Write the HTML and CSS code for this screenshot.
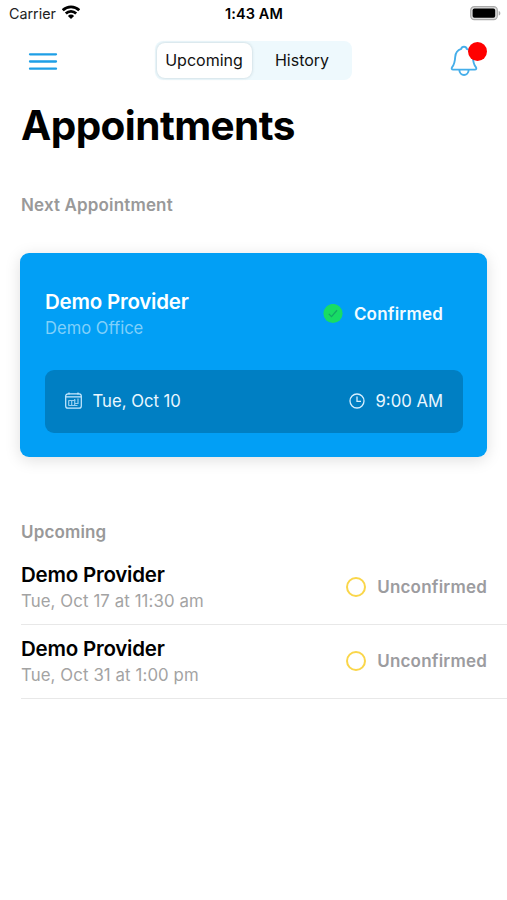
FILE: index.html
```html
<!DOCTYPE html>
<html lang="en">
<head>
<meta charset="utf-8">
<title>Appointments</title>
<link rel="stylesheet" href="styles.css">
</head>
<body>
<header class="status">
  <div class="carrier"><span class="carrier-name">Carrier</span>
    <svg width="18" height="14" viewBox="0 0 18 14" fill="none" stroke="#000" stroke-width="2.7"><path d="M.8 5.200a11.700 11.700 0 0 1 16.400 0M3.800 8.500a7.400 7.400 0 0 1 10.400 0"/><path d="M9 14 5.900 10.900a4.400 4.400 0 0 1 6.200 0z" fill="#000" stroke="none"/></svg>
  </div>
  <span class="time">1:43 AM</span>
  <svg class="battery" width="31" height="15" viewBox="0 0 31 15"><rect x=".7" y=".7" width="26.6" height="13" rx="3.600" fill="#ddd" stroke="#aaa" stroke-width="1.200"/><rect x="2.600" y="2.600" width="22.600" height="9.200" rx="1.800"/><path d="M28.700 4.900c2.200.7 2.200 4 0 4.700z" fill="#aaa"/></svg>
</header>
<nav class="nav">
  <svg class="menu" width="30" height="20" viewBox="0 0 30 20" stroke="#1e9fe6" stroke-width="2.3" stroke-linecap="round"><path d="M2 2.300h26M2 9.500h26M2 16.700h26"/></svg>
  <div class="segment"><span class="tab active"><b>Upcoming</b></span><span class="tab"><b>History</b></span></div>
  <div class="bell">
    <svg width="28" height="32" viewBox="0 0 28 32" fill="none" stroke="#45aeea" stroke-width="1.900" stroke-linejoin="round"><path d="M14 1.800c-1.800 0-2.500 1-2.700 2.100C7.500 5 5.500 8 5.200 12c-.3 5-.8 7.500-3.100 10.200-.9 1.200-.3 2.400 1 2.400h21.800c1.300 0 1.900-1.200 1-2.400-2.300-2.700-2.800-5.200-3.100-10.200-.3-4-2.300-7-6.100-8.100C16.500 2.800 15.800 1.800 14 1.800zM9.300 24.800c.2 6.900 9.200 6.900 9.400 0"/></svg>
    <i class="badge"></i>
  </div>
</nav>
<main>
  <h1>Appointments</h1>
  <h2 class="next">Next Appointment</h2>
  <section class="card">
    <div class="card-top">
      <div><div class="name">Demo Provider</div><div class="office">Demo Office</div></div>
      <div class="state confirmed"><svg width="20" height="20" viewBox="0 0 20 20"><circle cx="10" cy="9.500" r="9.600" fill="#18dc64"/><path d="m5.800 9.900 2.700 2.700 5.500-6.300" fill="none" stroke="#14a965" stroke-width="1.300"/></svg><span>Confirmed</span></div>
    </div>
    <div class="slot">
      <div class="date"><svg width="17" height="17" viewBox="0 0 17 17" fill="none" stroke="#c9eaff" stroke-width="1.200"><rect x=".7" y="1.800" width="15.600" height="14.400" rx="2.300"/><path d="M1 4.800h15M4 .5v2M13 .5v2"/><path d="M3.500 8.500h7M3.500 13.500h9M3.700 8.500v5M6.700 8.500v5M9.700 7v6.500M13 6.500v5h-3" opacity=".75"/></svg><span>Tue, Oct 10</span></div>
      <div class="hour"><svg width="16" height="16" viewBox="0 0 16 16" fill="none" stroke="#d6efff" stroke-width="1.300"><circle cx="8" cy="8" r="7"/><path d="M8 3.500V8.400h4"/></svg><span>9:00 AM</span></div>
    </div>
  </section>
  <h2 class="upcoming">Upcoming</h2>
  <ul class="list">
    <li><div><div class="name">Demo Provider</div><div class="when">Tue, Oct 17 at 11:30 am</div></div><div class="state"><i class="ring"></i><span>Unconfirmed</span></div></li>
    <li><div><div class="name">Demo Provider</div><div class="when">Tue, Oct 31 at 1:00 pm</div></div><div class="state"><i class="ring"></i><span>Unconfirmed</span></div></li>
  </ul>
</main>
</body>
</html>
```
FILE: styles.css
```css
* { box-sizing: border-box; }
body { margin: 0; background: #fff; color: #000; font-family: Inter, "Liberation Sans", sans-serif; height: 900px; overflow: hidden; }
svg { display: block; flex: none; }
.status { height: 28px; padding: 0 6px 2px 9px; display: grid; grid-template-columns: 1fr auto 1fr; align-items: center; }
.carrier { display: flex; align-items: center; gap: 6px; font-size: 14.3px; color: #222; }
.carrier svg { margin-top: -2px; }
.time { font-size: 14.5px; font-weight: 600; letter-spacing: .1px; margin: 1px 2px 0 0; }
.battery { justify-self: end; }
.nav { height: 66px; padding: 13px 19px 0 28px; display: flex; justify-content: space-between; align-items: flex-start; }
.menu { margin-top: 11px; }
.segment { width: 197px; height: 39px; margin-right: 3px; padding: 2px; display: grid; grid-template-columns: 95px 1fr; border-radius: 8px; background: #eef9fd; }
.tab { display: flex; align-items: center; justify-content: center; padding: 0 0 1px 3px; font-size: 16px; color: #111; border-radius: 8px; }
.tab b { font-weight: 400; }
.active { padding-left: 0; background: #fff; box-shadow: 0 0 3px rgba(80, 110, 120, .3); }
.bell { position: relative; width: 38px; height: 36px; margin: 4px 0 0 -1px; }
.badge { position: absolute; left: 18px; top: -3px; width: 19px; height: 19px; border-radius: 50%; background: #f00; }
h1 { margin: 0 0 0 21px; height: 64px; line-height: 64px; font-size: 40.5px; font-weight: 700; letter-spacing: -.57px; }
h2 { margin: 0 0 0 21px; height: 24px; line-height: 25px; font-size: 17px; font-weight: 600; letter-spacing: .15px; color: #999; }
.next { margin-top: 35px; }
.card { margin: 36px 20px 0; height: 204px; padding: 36px 24px 24px 25px; border-radius: 9px; background: #029ff5; color: #fff; box-shadow: 0 3px 16px rgba(0, 0, 0, .13); }
.card-top { display: flex; justify-content: space-between; height: 81px; padding-right: 20px; }
.name { height: 27px; line-height: 25px; font-size: 20.5px; font-weight: 600; letter-spacing: -.22px; }
.office { height: 25px; line-height: 24px; font-size: 16.6px; color: #80d0fa; }
.state { display: flex; align-items: center; gap: 11px; height: 50px; font-size: 17px; font-weight: 600; letter-spacing: .2px; color: #9c9c9f; }
.confirmed { color: #f2fbff; }
.slot { height: 63px; padding: 0 20px 2px; display: flex; justify-content: space-between; align-items: center; border-radius: 9px; background: #007fc3; font-size: 16.7px; color: #eaf7ff; }
.date, .hour { display: flex; align-items: center; gap: 10.5px; }
.upcoming { margin-top: 63px; }
.list { list-style: none; margin: 7px 0 0 21px; padding: 0; }
.list li { height: 74px; padding: 11px 20px 0 0; display: flex; justify-content: space-between; border-bottom: 1px solid #e8e8e8; }
.when { height: 25px; line-height: 25px; font-size: 16.8px; letter-spacing: .1px; color: #a3a3a3; }
.ring { width: 20px; height: 20px; border: 2px solid #fad64a; border-radius: 50%; }
```
